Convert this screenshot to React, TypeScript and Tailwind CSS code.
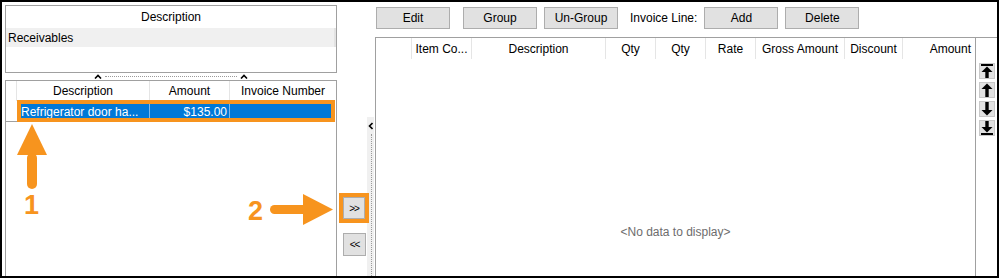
import type { ReactNode } from "react";

const ORANGE = "#f7941e";

function Caret({ dir = "up" }: { dir?: "up" | "left" }) {
  return dir === "up" ? (
    <svg width="8" height="5" viewBox="0 0 8 5">
      <path d="M1 4.5 L4 1.5 L7 4.5" fill="none" stroke="#000" strokeWidth="1.6" />
    </svg>
  ) : (
    <svg width="5" height="8" viewBox="0 0 5 8">
      <path d="M4.5 1 L1.5 4 L4.5 7" fill="none" stroke="#000" strokeWidth="1.6" />
    </svg>
  );
}

function Btn({ children, className = "" }: { children: ReactNode; className?: string }) {
  return (
    <div className={`h-[22px] flex items-center justify-center bg-[#e1e1e1] border border-[#adadad] text-black ${className}`}>
      {children}
    </div>
  );
}

function HeadCell({ w, children, align = "center", last = false }: { w: number; children?: ReactNode; align?: "center" | "right"; last?: boolean }) {
  return (
    <div
      className={`h-full flex items-center px-1 whitespace-nowrap overflow-hidden ${align === "right" ? "justify-end" : "justify-center"} ${last ? "" : "border-r border-[#e5e5e5]"}`}
      style={{ width: w }}
    >
      {children}
    </div>
  );
}

function ScrollIcon({ kind }: { kind: "top" | "up" | "down" | "bottom" }) {
  const flip = kind === "down" || kind === "bottom";
  const bar = kind === "top" || kind === "bottom";
  return (
    <svg width="12" height="14" viewBox="0 0 12 14" style={{ transform: flip ? "scaleY(-1)" : undefined }}>
      {bar && <rect x="0" y="0" width="12" height="2" fill="#000" />}
      <path d={bar ? "M6 2.5 L11.5 8 L0.5 8 Z" : "M6 0.5 L11.5 6 L0.5 6 Z"} fill="#000" />
      <rect x="4.3" y={bar ? 7.5 : 5.5} width="3.4" height={bar ? 6.5 : 8.5} fill="#000" />
    </svg>
  );
}

export default function App() {
  const rightCols: { w: number; label: string; align?: "center" | "right" }[] = [
    { w: 36, label: "" },
    { w: 60, label: "Item Co..." },
    { w: 134, label: "Description" },
    { w: 50, label: "Qty" },
    { w: 50, label: "Qty" },
    { w: 50, label: "Rate" },
    { w: 89, label: "Gross Amount" },
    { w: 58, label: "Discount" },
    { w: 72, label: "Amount", align: "right" },
  ];

  return (
    <div className="relative w-[999px] h-[278px] border-2 border-black bg-white flex overflow-hidden font-['Liberation_Sans',Arial,sans-serif] text-[12px] text-black">
      {/* left column */}
      <div className="w-[335px] pl-[3px] pt-[3px] flex flex-col">
        <div className="w-[332px] h-[68px] border border-[#a0a0a0] flex flex-col">
          <div className="h-[21px] flex items-center justify-center">Description</div>
          <div className="h-[19px] mt-[1px] flex items-center pl-[2px] bg-[#f0f0f0] border-r-2 border-[#e3e3e3]">Receivables</div>
        </div>
        <div className="h-[7px] flex items-center">
          <div className="ml-[83px] w-[166px] h-[7px] bg-white flex items-center justify-between px-[6px]">
            <Caret />
            <div className="flex-1 mx-[3px] border-t border-dotted border-[#9a9a9a]" />
            <Caret />
          </div>
        </div>
        <div className="w-[332px] flex-1 border-x border-t border-[#a0a0a0] flex flex-col">
          <div className="h-[20px] flex">
            <div className="w-[11px] border-r border-[#e5e5e5]" />
            <div className="w-[133px] flex items-center justify-center border-r border-[#e5e5e5]">Description</div>
            <div className="w-[80px] flex items-center justify-center border-r border-[#e5e5e5]">Amount</div>
            <div className="w-[106px] flex items-center justify-center">Invoice Number</div>
          </div>
          <div className="h-[21px] flex">
            <div className="w-[11px] border-b border-[#a0a0a0]" />
            <div className="flex-1 flex my-[1px] ml-[3px] mr-[3px] bg-[#0078d7] text-white">
              <div className="w-[130px] flex items-center pl-[1px] border-r border-[#7fb7e8] whitespace-nowrap overflow-hidden">Refrigerator door ha...</div>
              <div className="w-[80px] flex items-center justify-end pr-[2px] border-r border-[#7fb7e8]">$135.00</div>
              <div className="flex-1" />
            </div>
          </div>
        </div>
      </div>

      {/* middle transfer buttons and splitter */}
      <div className="w-[38px] flex">
        <div className="w-[30px] pl-[6px] pt-[195px] flex flex-col gap-[14px]">
          <Btn className="w-[22px] h-[22px] text-[10px] tracking-[-1px]">&gt;&gt;</Btn>
          <Btn className="w-[23px] h-[23px] text-[10px] tracking-[-1px]">&lt;&lt;</Btn>
        </div>
        <div className="w-[7px] mt-[115px] bg-[#f0f0f0] flex flex-col items-center pt-[5px]">
          <Caret dir="left" />
          <div className="flex-1 mt-[4px] ml-[2px] border-l border-dotted border-[#9a9a9a]" />
        </div>
      </div>

      {/* right column */}
      <div className="flex-1 flex flex-col">
        <div className="h-[35px] pt-[5px] pl-[1px] flex items-start">
          <Btn className="w-[74px]">Edit</Btn>
          <Btn className="w-[74px] ml-[13px]">Group</Btn>
          <Btn className="w-[74px] ml-[7px]">Un-Group</Btn>
          <div className="h-[22px] ml-[12px] flex items-center">Invoice Line:</div>
          <Btn className="w-[74px] ml-[7px]">Add</Btn>
          <Btn className="w-[74px] ml-[7px]">Delete</Btn>
        </div>
        <div className="flex-1 flex border-t border-l border-[#a0a0a0]">
          <div className="w-[599px] flex flex-col">
            <div className="h-[21px] flex">
              {rightCols.map((c, i) => (
                <HeadCell key={i} w={c.w} align={c.align} last={i === rightCols.length - 1}>
                  {c.label}
                </HeadCell>
              ))}
            </div>
            <div className="flex-1 pt-[164px] text-center text-[#6d6d6d]">&lt;No data to display&gt;</div>
          </div>
          <div className="flex-1 border-l border-[#a0a0a0] pt-[25px] pl-[3px] flex flex-col gap-[3px]">
            {(["top", "up", "down", "bottom"] as const).map((k) => (
              <div key={k} className="w-[16px] h-[16px] bg-[#e1e1e1] border border-[#c8c8c8] flex items-center justify-center">
                <ScrollIcon kind={k} />
              </div>
            ))}
          </div>
        </div>
      </div>

      {/* annotations */}
      <div className="absolute left-[15px] top-[98px] w-[318px] h-[22px] border-4 border-[#f7941e]" />
      <div className="absolute left-[337px] top-[191px] w-[30px] h-[30px] border-4 border-[#f7941e]" />
      <svg className="absolute left-[14px] top-[122px]" width="32" height="66" viewBox="0 0 32 66">
        <path d="M16 0 L31 31 L1 31 Z" fill={ORANGE} />
        <rect x="11" y="29" width="10" height="36" rx="5" fill={ORANGE} />
      </svg>
      <div className="absolute left-[22px] top-[190px] text-[27px] leading-none font-bold text-[#f7941e]">1</div>
      <svg className="absolute left-[268px] top-[192px]" width="64" height="31" viewBox="0 0 64 31">
        <rect x="0" y="11" width="38" height="9" rx="4.5" fill={ORANGE} />
        <path d="M33 0 L63 15.5 L33 31 Z" fill={ORANGE} />
      </svg>
      <div className="absolute left-[246px] top-[196px] text-[27px] leading-none font-bold text-[#f7941e]">2</div>
    </div>
  );
}
